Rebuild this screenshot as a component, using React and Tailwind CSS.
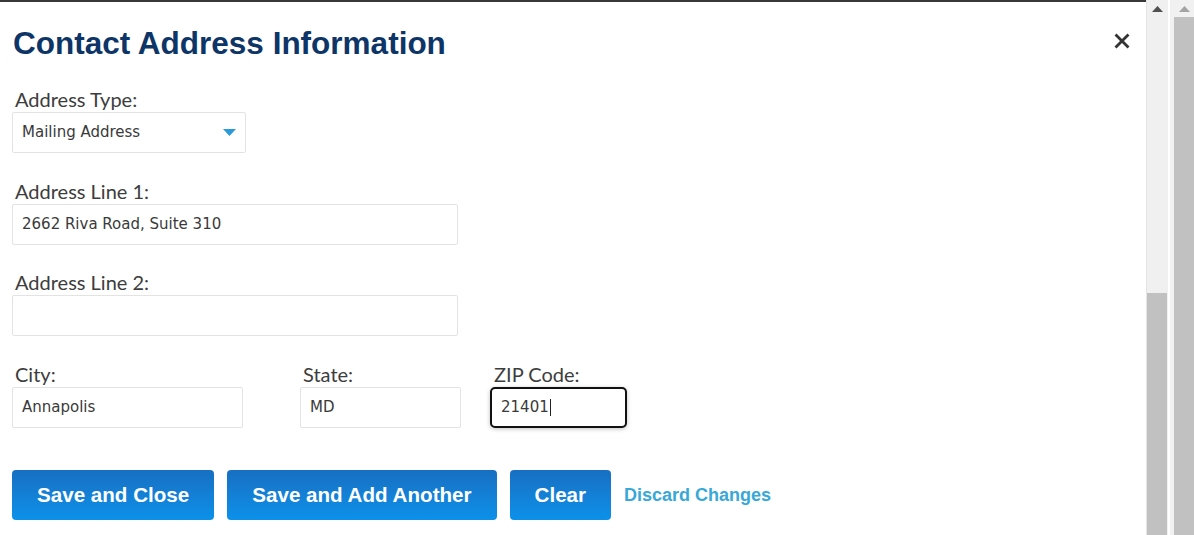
const labelCls = "block pl-[3px] text-[20px] leading-[20px] text-[#3d3d3d] font-['Lato',sans-serif] mb-[3px]";
const inputCls =
  "h-[41px] border border-[#e3e3e3] rounded-[2px] bg-white pl-[9px] flex items-center text-[15px] text-[#3a3a3a] font-['DejaVu_Sans',sans-serif]";

function Field({ label, value, width, className = '' }) {
  return (
    <div className={className}>
      <label className={labelCls}>{label}</label>
      <div className={`${inputCls} ${width}`}>{value}</div>
    </div>
  );
}

function Button({ children }) {
  return (
    <button className="h-[50px] px-[25px] rounded-[4px] bg-gradient-to-b from-[#176fc2] to-[#0b91ea] text-white text-[20.6px] font-bold font-['Liberation_Sans',Arial,sans-serif]">
      {children}
    </button>
  );
}

export default function App() {
  return (
    <div className="flex h-[535px] w-[1194px] overflow-hidden bg-white">
      {/* dialog body */}
      <div className="w-[1146px] shrink-0 border-t-2 border-[#383838]">
        <div className="flex items-start justify-between pl-[13px] pr-[16px] pt-[23px]">
          <h1 className="text-[31.5px] leading-[36px] font-bold text-[#0d3567] font-['Liberation_Sans',Arial,sans-serif]">
            Contact Address Information
          </h1>
          <button className="mt-[8px]" aria-label="Close">
            <svg width="16" height="16" viewBox="0 0 16 16">
              <path d="M2.5 2.5 L13.5 13.5 M13.5 2.5 L2.5 13.5" stroke="#333" strokeWidth="2.8" strokeLinecap="square" />
            </svg>
          </button>
        </div>

        <div className="pl-[12px] pt-[28px]">
          <div>
            <label className={labelCls}>Address Type:</label>
            <div className={`${inputCls} w-[234px] justify-between pr-[9px]`}>
              <span>Mailing Address</span>
              <svg width="13" height="7" viewBox="0 0 13 7">
                <path d="M0 0 H13 L6.5 7 Z" fill="#2a9ad8" />
              </svg>
            </div>
          </div>

          <Field label="Address Line 1:" value="2662 Riva Road, Suite 310" width="w-[446px]" className="mt-[28px]" />
          <Field label="Address Line 2:" value="" width="w-[446px]" className="mt-[27px]" />

          <div className="flex mt-[28px]">
            <Field label="City:" value="Annapolis" width="w-[231px]" className="w-[288px]" />
            <Field label="State:" value="MD" width="w-[161px]" className="w-[190px]" />
            <div>
              <label className={`${labelCls} pl-[4px]`}>ZIP Code:</label>
              <div className="h-[41px] w-[137px] border-2 border-[#111] rounded-[5px] bg-white pl-[9px] flex items-center text-[15px] text-[#3a3a3a] font-['DejaVu_Sans',sans-serif] shadow-[0_1px_4px_rgba(0,0,0,0.25)]">
                21401<span className="inline-block w-px h-[17px] bg-[#222] ml-px" />
              </div>
            </div>
          </div>

          <div className="flex items-center gap-[13px] mt-[42px]">
            <Button>Save and Close</Button>
            <Button>Save and Add Another</Button>
            <Button>Clear</Button>
            <a className="text-[18px] font-bold text-[#37a8d8] font-['Liberation_Sans',Arial,sans-serif] cursor-pointer">
              Discard Changes
            </a>
          </div>
        </div>
      </div>

      {/* inner scrollbar */}
      <div className="w-[22px] shrink-0 flex flex-col bg-[#f0f0f0] border-l border-[#e4e4e4]">
        <div className="h-[17px] flex items-center justify-center">
          <svg width="11" height="6" viewBox="0 0 11 6">
            <path d="M5.5 0 L11 6 H0 Z" fill="#505050" />
          </svg>
        </div>
        <div className="mt-[276px] flex-1 bg-[#c1c1c1] mr-px" />
      </div>

      {/* outer scrollbar */}
      <div className="flex-1 flex flex-col bg-[#f1f1f1] pl-[4px] border-l-2 border-white">
        <div className="h-[17px] flex items-center justify-center">
          <svg width="11" height="6" viewBox="0 0 11 6">
            <path d="M5.5 0 L11 6 H0 Z" fill="#a3a3a3" />
          </svg>
        </div>
        <div className="flex-1 bg-[#c1c1c1]" />
      </div>
    </div>
  );
}
